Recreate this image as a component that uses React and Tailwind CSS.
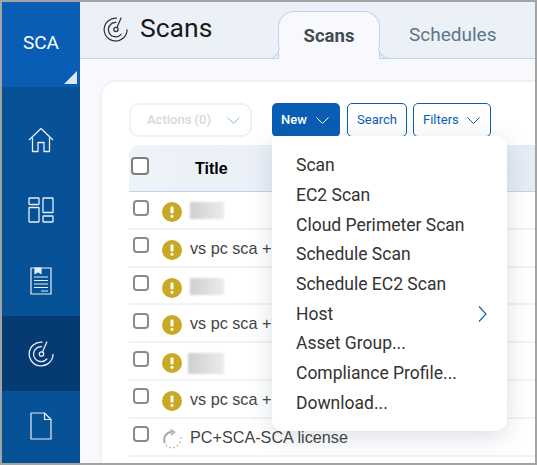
import React from "react";

function ScanIcon({ className }) {
    return (
        <svg viewBox="0 0 26 26" fill="none" stroke="currentColor" strokeWidth={1.3} strokeLinecap="round" className={className}>
            <path d="M14 1.2A11.9 11.9 0 1 0 25 13.5" />
            <path d="M13.5 5.6A7.5 7.5 0 1 0 18.8 18" />
            <circle cx="13.5" cy="13" r="2.2" />
            <path d="M14.5 11 18.8 1" />
        </svg>
    );
}

function HomeIcon() {
    return (
        <svg viewBox="0 0 26 26" fill="none" stroke="currentColor" strokeWidth={1.3} strokeLinejoin="round" className="w-[26px] h-[26px]">
            <path d="M1 13 13 1.5 25 13" />
            <path d="M4.5 10.5V24.5H10V15.5H16V24.5H21.5V10.5" />
        </svg>
    );
}

function BoardIcon() {
    return (
        <svg viewBox="0 0 26 26" fill="none" stroke="currentColor" strokeWidth={1.3} className="w-[26px] h-[26px]">
            <rect x="1" y="1" width="10" height="6.5" rx="0.5" />
            <rect x="1" y="10.5" width="10" height="14.5" rx="0.5" />
            <rect x="15" y="1" width="10" height="14.5" rx="0.5" />
            <rect x="15" y="19" width="10" height="6" rx="0.5" />
        </svg>
    );
}

function ReportIcon() {
    return (
        <svg viewBox="0 0 22 28" fill="none" stroke="currentColor" strokeWidth={1.2} className="w-[22px] h-[28px]">
            <path d="M1 1H21V27H1Z" />
            <path d="M5 1H11V6.5L8 4.8 5 6.5Z" fill="currentColor" />
            <path d="M4 10H18M4 13.5H18M4 17H18M4 20.5H18M11 24H18" />
        </svg>
    );
}

function FileIcon() {
    return (
        <svg viewBox="0 0 22 28" fill="none" stroke="currentColor" strokeWidth={1.2} strokeLinejoin="round" className="w-[22px] h-[28px]">
            <path d="M1 1H14.5L21 7.5V27H1Z" />
            <path d="M14.5 1V7.5H21" />
        </svg>
    );
}

function Chevron({ className }) {
    return (
        <svg viewBox="0 0 13 7" fill="none" stroke="currentColor" strokeWidth={1} className={`w-[13px] h-[7px] shrink-0 ${className || ""}`}>
            <path d="M.5.5 6.5 6.5 12.5.5" />
        </svg>
    );
}

function WarnIcon() {
    return (
        <svg viewBox="0 0 20 20" className="w-5 h-5 shrink-0">
            <circle cx="10" cy="10" r="10" fill="#c9a824" />
            <rect x="8.5" y="4.5" width="3" height="7" rx="1" fill="#ffffff" />
            <rect x="8.5" y="13" width="3" height="2.8" rx="1" fill="#ffffff" />
        </svg>
    );
}

function Spinner() {
    return (
        <svg viewBox="0 0 20 20" fill="none" strokeLinecap="round" className="w-5 h-5 shrink-0">
            <path d="M2.6 13.5A7.8 7.8 0 0 1 9.5 3" stroke="#a8a8a8" strokeWidth={2} />
            <path d="M9 .8 12.6 3 9.6 5.6" stroke="#a8a8a8" strokeWidth={1.4} />
            <path d="M4.5 16.5v0M8 18.5v0M12 18.5v0M15.5 16.5v0M18 13v0M19 9v0" stroke="#aaaaaa" strokeWidth={1.7} />
        </svg>
    );
}

function Blur({ wide }) {
    return <div className={`bg-gradient-to-r from-[#cfcfcf] to-[#ececec] blur-[1px] mt-[1px] ${wide ? "w-[36px] h-[21px] -ml-0.5" : "w-[34px] h-[17px]"}`} />;
}

function NavItem({ children, active, className }) {
    return (
        <div className={`shrink-0 flex items-center justify-center text-[#e6eefa] ${active ? "bg-[#063a72]" : ""} ${className}`}>
            {children}
        </div>
    );
}

function Row({ children, icon }) {
    return (
        <div className="relative h-[37.8px] shrink-0 flex items-start pl-[4px] pt-[7.5px] border-b-2 border-[#f2f2f2]">
            <span className="w-[16px] h-[16px] rounded-[4px] border-2 border-[#8a8a8a] bg-white shrink-0" />
            <div className="ml-[13px] mt-[2.5px] flex items-start gap-2 text-[16.2px] leading-[19px] text-[#444444]">
                {icon || <WarnIcon />}
                <div className="-mt-px whitespace-nowrap flex items-start">{children}</div>
            </div>
        </div>
    );
}

const menuItems = ["Scan", "EC2 Scan", "Cloud Perimeter Scan", "Schedule Scan", "Schedule EC2 Scan", "Host", "Asset Group...", "Compliance Profile...", "Download..."];

export default function App() {
    return (
        <div className="w-[537px] h-[465px] border-2 border-[#a3a3a3] flex overflow-hidden bg-white font-['Roboto',sans-serif]">
            {/* sidebar */}
            <div className="w-[78px] shrink-0 bg-[#075196] flex flex-col">
                <div className="relative h-[85px] shrink-0 bg-[#0a5db4] flex items-center justify-center text-white text-[19px] pb-[3px]">
                    SCA
                    <div className="absolute right-[3px] bottom-[3px] w-[13px] h-[13px] bg-[#dbe6f4] [clip-path:polygon(100%_0,100%_100%,0_100%)]" />
                </div>
                <div className="h-[18px] shrink-0" />
                <NavItem className="h-[70px]"><HomeIcon /></NavItem>
                <NavItem className="h-[70px]"><BoardIcon /></NavItem>
                <NavItem className="h-[71px]"><ReportIcon /></NavItem>
                <NavItem className="h-[75px]" active><ScanIcon className="w-[26px] h-[26px]" /></NavItem>
                <NavItem className="h-[70px]"><FileIcon /></NavItem>
            </div>

            <div className="flex-1 min-w-0 flex flex-col bg-[#f7f9fc]">
                {/* header */}
                <div className="h-[57px] shrink-0 bg-[#ecf1f8] border-b border-[#bcd4ee] flex items-start">
                    <ScanIcon className="ml-[23px] mt-[15px] w-[25px] h-[25px] text-[#333333]" />
                    <div className="ml-[12px] mt-[9px] w-[72px] text-[26.5px] leading-[34px] text-[#1a1a1a]">Scans</div>
                    <div className="relative ml-[66px] mt-[9px] w-[102px] h-[48px] bg-[#f7f9fc] border border-b-0 border-[#bcd4ee] rounded-t-[16px] flex items-center justify-center text-[18.5px] font-bold text-[#444b52] pt-[2px]">
                        Scans
                        <span className="absolute left-full -ml-px bottom-0 w-[12px] h-[12px] bg-[#ecf1f8] border-l border-b border-[#bcd4ee] rounded-bl-[12px]" />
                        <span className="absolute right-full -mr-px bottom-0 w-[12px] h-[12px] bg-[#ecf1f8] border-r border-b border-[#bcd4ee] rounded-br-[12px]" />
                    </div>
                    <div className="ml-[29px] mt-[16px] text-[19px] leading-[34px] text-[#5f7488]">Schedules</div>
                </div>

                {/* card */}
                <div className="flex-1 min-h-0 pl-[20px] pt-[21px]">
                    <div className="h-full bg-white border-t-2 border-l-2 border-[#eef1f6] rounded-tl-[16px] pl-[27px] pt-[21px] relative">
                        <div className="flex items-start text-[13px]">
                            <button className="w-[123px] h-[34px] border-2 border-[#eef2f7] rounded-[10px] flex items-center pl-[16px] gap-[16px] text-[#d3d9e0] font-medium">
                                Actions (0)
                                <Chevron className="text-[#8db4e2]" />
                            </button>
                            <button className="ml-[20px] w-[68px] h-[34px] bg-[#0a5db4] rounded-[5px] flex items-center pl-[9px] gap-[9px] text-white font-medium">
                                New
                                <Chevron />
                            </button>
                            <button className="ml-[7px] w-[60px] h-[34px] border border-[#0a5db4] rounded-[5px] text-[#0a5db4]">
                                Search
                            </button>
                            <button className="ml-[6px] w-[78px] h-[34px] border border-[#0a5db4] rounded-[5px] flex items-center pl-[9px] gap-[8px] text-[#0a5db4]">
                                Filters
                                <Chevron />
                            </button>
                        </div>

                        {/* table */}
                        <div className="mt-[8px] h-[47px] bg-gradient-to-r from-[#eef2f9] to-[#e6ecf5] border-b border-[#bcd4ee] rounded-tl-[10px] flex items-start pl-[2px]">
                            <span className="mt-[12px] w-[18px] h-[18px] rounded-[4px] border-2 border-[#7e7e7e] bg-white" />
                            <span className="ml-[46px] mt-[12px] text-[16px] font-bold text-black font-['Liberation_Sans',sans-serif]">Title</span>
                        </div>
                        <div className="font-['Liberation_Sans',sans-serif]">
                            <Row><Blur /></Row>
                            <Row>vs pc sca + sca</Row>
                            <Row><Blur /></Row>
                            <Row>vs pc sca + sca</Row>
                            <Row><Blur wide /></Row>
                            <Row>vs pc sca + sca</Row>
                            <Row icon={<Spinner />}>PC+SCA-SCA license</Row>
                        </div>

                        {/* dropdown menu */}
                        <div className="absolute left-[170px] top-[54px] w-[235px] h-[295px] bg-white rounded-b-[12px] rounded-tr-[10px] shadow-[0_6px_24px_rgba(60,80,110,0.18)] pl-[24px] pt-[14.5px] z-10">
                            {menuItems.map((item) => (
                                <div key={item} className="h-[29.7px] flex items-center justify-between pr-[20px] text-[17.5px] text-[#333333]">
                                    {item}
                                    {item === "Host" && (
                                        <svg viewBox="0 0 9 16" fill="none" stroke="#0a5db4" strokeWidth={1.1} className="w-[9px] h-[16px]">
                                            <path d="M1 .5 8 8 1 15.5" />
                                        </svg>
                                    )}
                                </div>
                            ))}
                        </div>
                    </div>
                </div>
            </div>
        </div>
    );
}
